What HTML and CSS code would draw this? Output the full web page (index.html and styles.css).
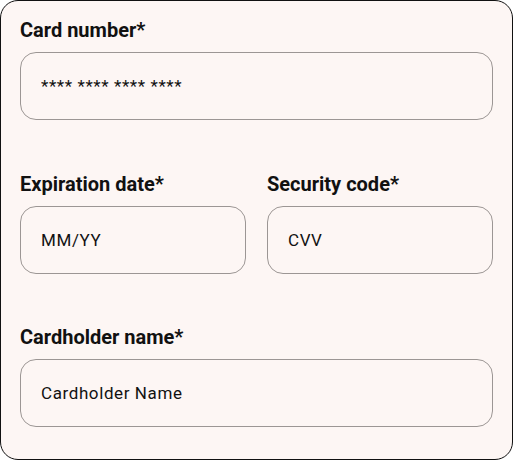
FILE: index.html
```html
<!DOCTYPE html>
<html lang="en">
<head>
  <meta charset="UTF-8">
  <title>Payment details</title>
  <link rel="stylesheet" href="styles.css">
</head>
<body>
  <form class="card-form">
    <div class="field">
      <label for="number">Card number*</label>
      <input type="text" id="number" placeholder="**** **** **** ****">
    </div>
    <div class="field-row">
      <div class="field">
        <label for="expiry">Expiration date*</label>
        <input type="text" id="expiry" placeholder="MM/YY">
      </div>
      <div class="field">
        <label for="cvv">Security code*</label>
        <input type="text" id="cvv" placeholder="CVV">
      </div>
    </div>
    <div class="field">
      <label for="holder">Cardholder name*</label>
      <input type="text" id="holder" placeholder="Cardholder Name">
    </div>
  </form>
</body>
</html>
```
FILE: styles.css
```css
body {
  margin: 0;
  font-family: Roboto, 'Noto Sans', sans-serif;
  background: #ffffff;
}

.card-form {
  box-sizing: border-box;
  width: 513px;
  height: 460px;
  margin: 0;
  padding: 17px 19px 0;
  background: #fdf6f4;
  border: 1px solid #111111;
  border-radius: 18px;
  display: flex;
  flex-direction: column;
  gap: 51.5px;
}

.field {
  display: flex;
  flex-direction: column;
  gap: 10px;
}

.field-row {
  display: grid;
  grid-template-columns: 1fr 1fr;
  gap: 21px;
}

.field label {
  font-size: 20px;
  line-height: 24px;
  font-weight: 700;
  color: #111111;
}

.field input {
  box-sizing: border-box;
  width: 100%;
  height: 68px;
  padding: 0 20px;
  font-family: Roboto, 'Noto Sans', sans-serif;
  font-size: 17px;
  letter-spacing: 0.6px;
  color: #111111;
  background: transparent;
  border: 1px solid #9c9694;
  border-radius: 16px;
  outline: none;
}

.field input::placeholder {
  color: #111111;
  opacity: 1;
}
```
